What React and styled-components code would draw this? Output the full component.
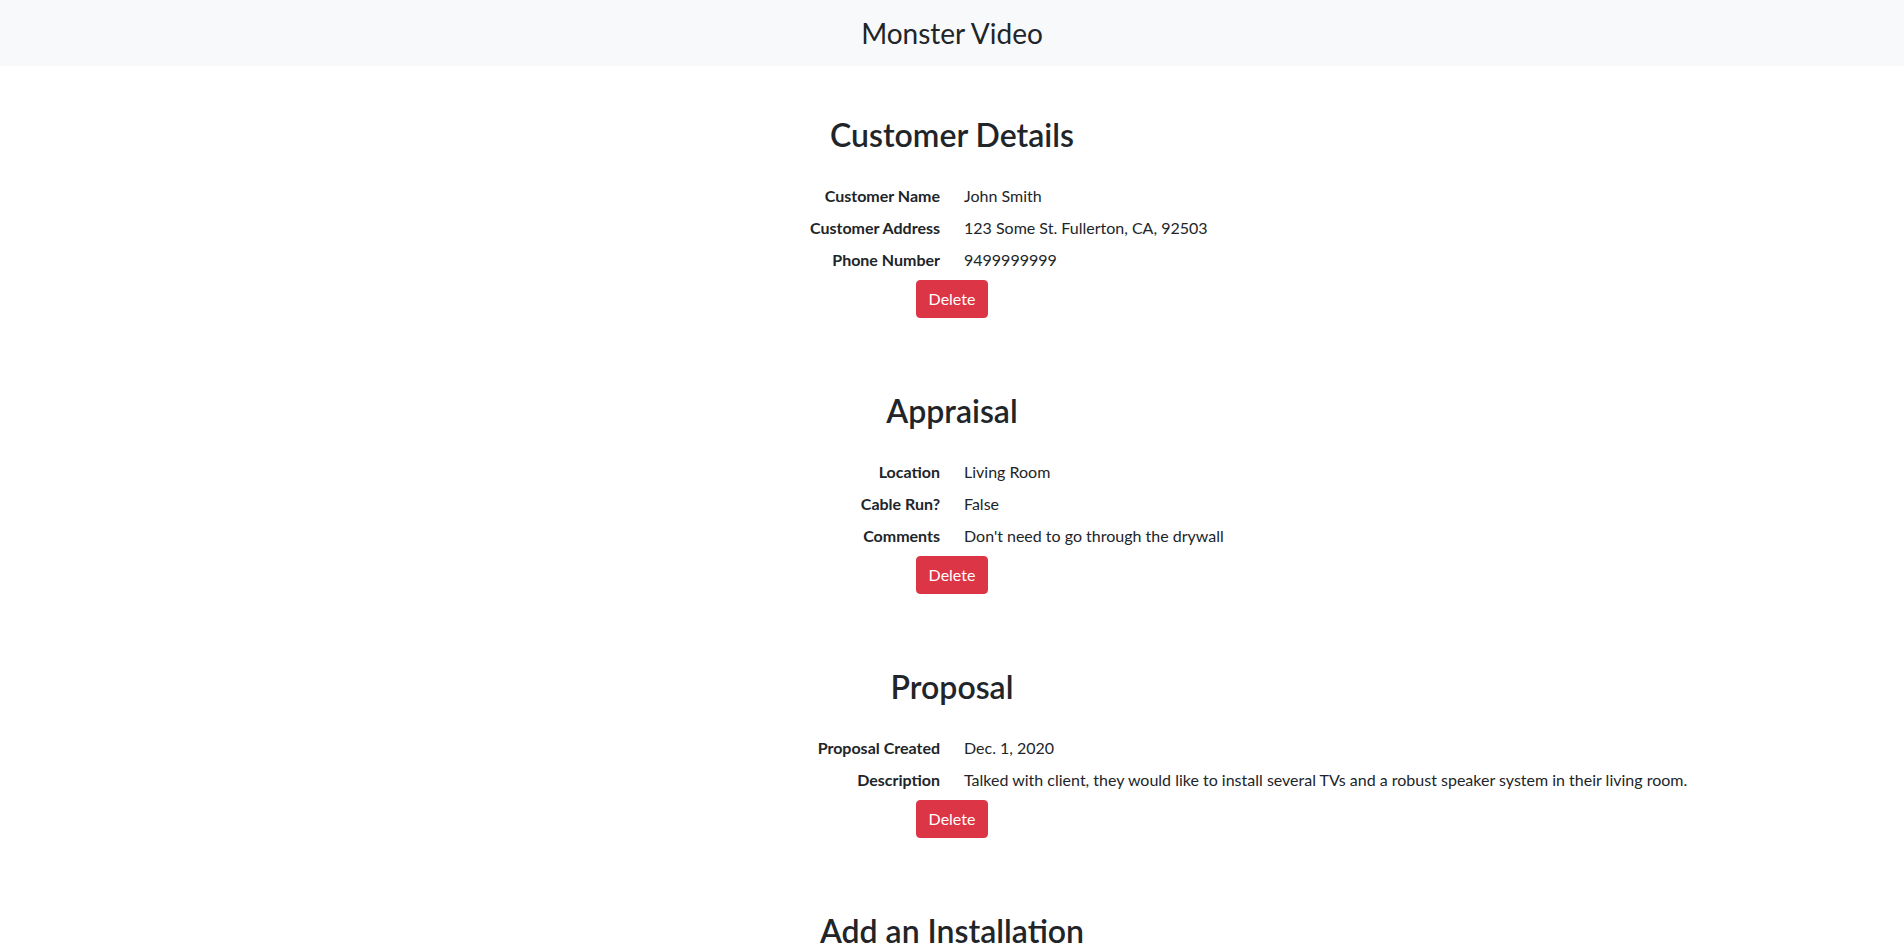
import React from "react";
import styled, { createGlobalStyle } from "styled-components";

const GlobalStyle = createGlobalStyle`
  html { scrollbar-width: none; }
  html::-webkit-scrollbar { display: none; }
  body {
    margin: 0;
    font-family: Lato, "Open Sans", "Noto Sans", sans-serif;
    font-size: 16px;
    line-height: 1.5;
    color: #212529;
    background: #ffffff;
  }
  * { box-sizing: border-box; }
`;

const NavBar = styled.header`
  height: 66px;
  padding-top: 2px;
  background: #f8f9fa;
  display: flex;
  align-items: center;
  justify-content: center;
`;

const Brand = styled.a`
  font-size: 28px;
  line-height: 1.2;
  font-weight: 400;
  color: #212529;
  text-decoration: none;
`;

const Main = styled.main`
  display: flex;
  flex-direction: column;
  gap: 72px;
  padding: 48px 0 80px;
`;

const Section = styled.section`
  display: flex;
  flex-direction: column;
  align-items: center;
`;

const Heading = styled.h2`
  margin: 0 0 25px;
  padding-top: 2px;
  font-size: 32px;
  line-height: 1.2;
  font-weight: 600;
  text-align: center;
`;

const DetailGrid = styled.dl`
  margin: 0;
  width: 100%;
  display: grid;
  grid-template-columns: 1fr 1fr;
  column-gap: 24px;
`;

const Label = styled.dt`
  padding: 5px 0 3px;
  font-weight: 700;
  text-align: right;
`;

const Value = styled.dd`
  margin: 0;
  padding: 5px 0 3px;
  text-align: left;
`;

const DangerButton = styled.button`
  margin-top: 4.5px;
  padding: 6px 12px;
  font-family: inherit;
  font-size: 16px;
  line-height: 24px;
  color: #ffffff;
  background: #dc3545;
  border: 1px solid #dc3545;
  border-radius: 4px;
  cursor: pointer;
`;

const Form = styled.form`
  display: grid;
  grid-template-columns: 1fr 1fr;
  column-gap: 24px;
  row-gap: 12px;
  width: 100%;
`;

const FieldLabel = styled.label`
  font-weight: 700;
  text-align: right;
  padding-top: 6px;
`;

const Input = styled.input`
  width: 320px;
  padding: 6px 12px;
  font-family: inherit;
  font-size: 16px;
  border: 1px solid #ced4da;
  border-radius: 4px;
`;

const sections = [
  {
    title: "Customer Details",
    rows: [
      ["Customer Name", "John Smith"],
      ["Customer Address", "123 Some St. Fullerton, CA, 92503"],
      ["Phone Number", "9499999999"],
    ],
  },
  {
    title: "Appraisal",
    rows: [
      ["Location", "Living Room"],
      ["Cable Run?", "False"],
      ["Comments", "Don't need to go through the drywall"],
    ],
  },
  {
    title: "Proposal",
    rows: [
      ["Proposal Created", "Dec. 1, 2020"],
      [
        "Description",
        "Talked with client, they would like to install several TVs and a robust speaker system in their living room.",
      ],
    ],
  },
];

export default function App() {
  return (
    <>
      <GlobalStyle />
      <NavBar>
        <Brand href="#">Monster Video</Brand>
      </NavBar>
      <Main>
        {sections.map((s) => (
          <Section key={s.title}>
            <Heading>{s.title}</Heading>
            <DetailGrid>
              {s.rows.map(([k, v]) => (
                <React.Fragment key={k}>
                  <Label>{k}</Label>
                  <Value>{v}</Value>
                </React.Fragment>
              ))}
            </DetailGrid>
            <DangerButton type="button">Delete</DangerButton>
          </Section>
        ))}
        <Section>
          <Heading>Add an Installation</Heading>
          <Form onSubmit={(e) => e.preventDefault()}>
            <FieldLabel htmlFor="date">Installation Date</FieldLabel>
            <div><Input id="date" type="text" /></div>
            <FieldLabel htmlFor="notes">Notes</FieldLabel>
            <div><Input id="notes" type="text" /></div>
          </Form>
        </Section>
      </Main>
    </>
  );
}
